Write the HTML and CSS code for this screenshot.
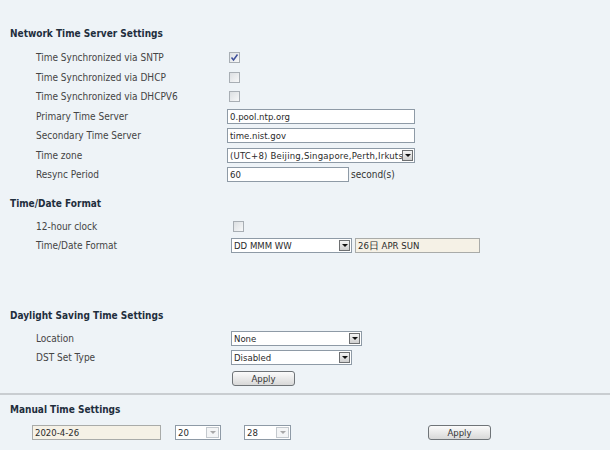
FILE: index.html
```html
<!DOCTYPE html>
<html>
<head>
<meta charset="utf-8">
<link rel="stylesheet" href="styles.css">
</head>
<body>
<div class="page">
  <h2 class="sec-title first">Network Time Server Settings</h2>
  <div class="form">
    <div class="row"><span class="label">Time Synchronized via SNTP</span><span class="ctl"><span class="cb checked"><svg viewBox="0 0 11 11" width="11" height="11"><path d="M2.5 5.5 L4.5 8 L8.5 2.5" fill="none" stroke="#3d4f9a" stroke-width="1.5"/></svg></span></span></div>
    <div class="row"><span class="label">Time Synchronized via DHCP</span><span class="ctl"><span class="cb"></span></span></div>
    <div class="row"><span class="label">Time Synchronized via DHCPV6</span><span class="ctl"><span class="cb"></span></span></div>
    <div class="row"><span class="label">Primary Time Server</span><span class="ctl"><span class="txt w188">0.pool.ntp.org</span></span></div>
    <div class="row"><span class="label">Secondary Time Server</span><span class="ctl"><span class="txt w188">time.nist.gov</span></span></div>
    <div class="row"><span class="label">Time zone</span><span class="ctl"><span class="sel w188"><span class="sel-text tz">(UTC+8) Beijing,Singapore,Perth,Irkutsk</span><span class="arrow"></span></span></span></div>
    <div class="row"><span class="label">Resync Period</span><span class="ctl"><span class="txt w122">60</span><span class="unit">second(s)</span></span></div>
  </div>

  <h2 class="sec-title second">Time/Date Format</h2>
  <div class="form shifted">
    <div class="row"><span class="label">12-hour clock</span><span class="ctl"><span class="cb"></span></span></div>
    <div class="row"><span class="label">Time/Date Format</span><span class="ctl"><span class="sel w121"><span class="sel-text">DD MMM WW</span><span class="arrow"></span></span><span class="txt ro w125">26日 APR SUN</span></span></div>
  </div>

  <h2 class="sec-title third">Daylight Saving Time Settings</h2>
  <div class="form shifted">
    <div class="row"><span class="label">Location</span><span class="ctl"><span class="sel w131"><span class="sel-text">None</span><span class="arrow"></span></span></span></div>
    <div class="row"><span class="label">DST Set Type</span><span class="ctl"><span class="sel w121"><span class="sel-text">Disabled</span><span class="arrow"></span></span></span></div>
    <div class="row btn-row"><span class="label"></span><span class="ctl"><span class="btn">Apply</span></span></div>
  </div>

  <div class="divider"></div>

  <h2 class="sec-title fourth">Manual Time Settings</h2>
  <div class="manual">
    <span class="txt ro w129">2020-4-26</span>
    <span class="sel w46 dis"><span class="sel-text">20</span><span class="arrow"></span></span>
    <span class="sel w47 dis"><span class="sel-text">28</span><span class="arrow"></span></span>
    <span class="btn manual-btn">Apply</span>
  </div>
</div>
</body>
</html>
```

FILE: styles.css
```css
html, body {
  margin: 0;
  padding: 0;
  background: #eef3f7;
}
body {
  font-family: "DejaVu Sans Condensed", "DejaVu Sans", sans-serif;
  font-size: 10px;
  color: #444;
  width: 610px;
  height: 450px;
  overflow: hidden;
}
.page {
  padding-top: 27px;
}
.sec-title {
  margin: 0;
  padding-left: 10px;
  font-size: 10px;
  font-weight: bold;
  color: #1f2e3d;
  height: 14px;
  line-height: 14px;
}
.sec-title.second { margin-top: 12px; }
.sec-title.third { margin-top: 53px; }
.sec-title.fourth { margin-top: 8px; }
.form {
  padding-left: 36px;
  margin-top: 7px;
}
.row {
  display: grid;
  grid-template-columns: 191px 1fr;
  align-items: center;
  height: 19.5px;
}
.form.shifted .row { grid-template-columns: 195px 1fr; }
.form.shifted { margin-top: 6px; }
.label {
  white-space: nowrap;
}
.ctl {
  display: flex;
  align-items: center;
}
.cb {
  display: inline-block;
  width: 9px;
  height: 9px;
  margin-left: 2px;
  border: 1px solid #a8aeb4;
  background: linear-gradient(135deg, #dcdfe2, #f7f8f9);
  position: relative;
}
.cb svg {
  position: absolute;
  left: -1px;
  top: -1px;
}
.txt, .sel {
  box-sizing: border-box;
  height: 15px;
  border: 1px solid #8e9aa6;
  background: #fff;
  font-size: 9.5px;
  line-height: 13px;
  padding-left: 2px;
  color: #2a2a2a;
  white-space: nowrap;
  overflow: hidden;
  display: inline-block;
}
.sel {
  display: inline-flex;
  align-items: center;
  padding-right: 1px;
}
.sel-text {
  flex: 1;
  overflow: hidden;
  white-space: nowrap;
}
.sel-text.tz { letter-spacing: 0.2px; }
.arrow {
  flex: none;
  width: 11px;
  height: 11px;
  box-sizing: border-box;
  border: 1px solid #6e7072;
  background: linear-gradient(#f4f4f4, #cfcfcf);
  position: relative;
}
.arrow::after {
  content: "";
  position: absolute;
  left: 2px;
  top: 3px;
  border-left: 3px solid transparent;
  border-right: 3px solid transparent;
  border-top: 3px solid #111;
}
.sel.dis .arrow {
  border-color: #c4c9ce;
  background: #f4f5f6;
  width: 13px;
}
.sel.dis .arrow::after {
  left: 3px;
  border-top-color: #a8a8a8;
}
.w188 { width: 188px; }
.w122 { width: 122px; }
.w121 { width: 121px; }
.w125 { width: 125px; }
.w131 { width: 131px; }
.w129 { width: 129px; }
.w46 { width: 46px; }
.w47 { width: 47px; }
.ro {
  background: #f5f1e6;
  border-color: #a9aba9;
}
.unit {
  margin-left: 2px;
  color: #333;
}
.ctl .ro { margin-left: 3px; }
.btn-row { height: 22px; }
.btn {
  box-sizing: border-box;
  display: inline-block;
  width: 63px;
  height: 15px;
  margin-left: 1px;
  border: 1px solid #6f7478;
  border-radius: 3px;
  background: linear-gradient(#fbfbfb, #d8d8d8);
  text-align: center;
  font-size: 9.5px;
  line-height: 13px;
  color: #333;
}
.divider {
  margin-top: 3px;
  height: 2px;
  background: #c9cdd1;
}
.manual {
  display: flex;
  align-items: center;
  padding-left: 32px;
  margin-top: 8px;
}
.manual .sel.w46 { margin-left: 14px; }
.manual .sel.w47 { margin-left: 23px; }
.manual-btn { margin-left: 137px; }
```
